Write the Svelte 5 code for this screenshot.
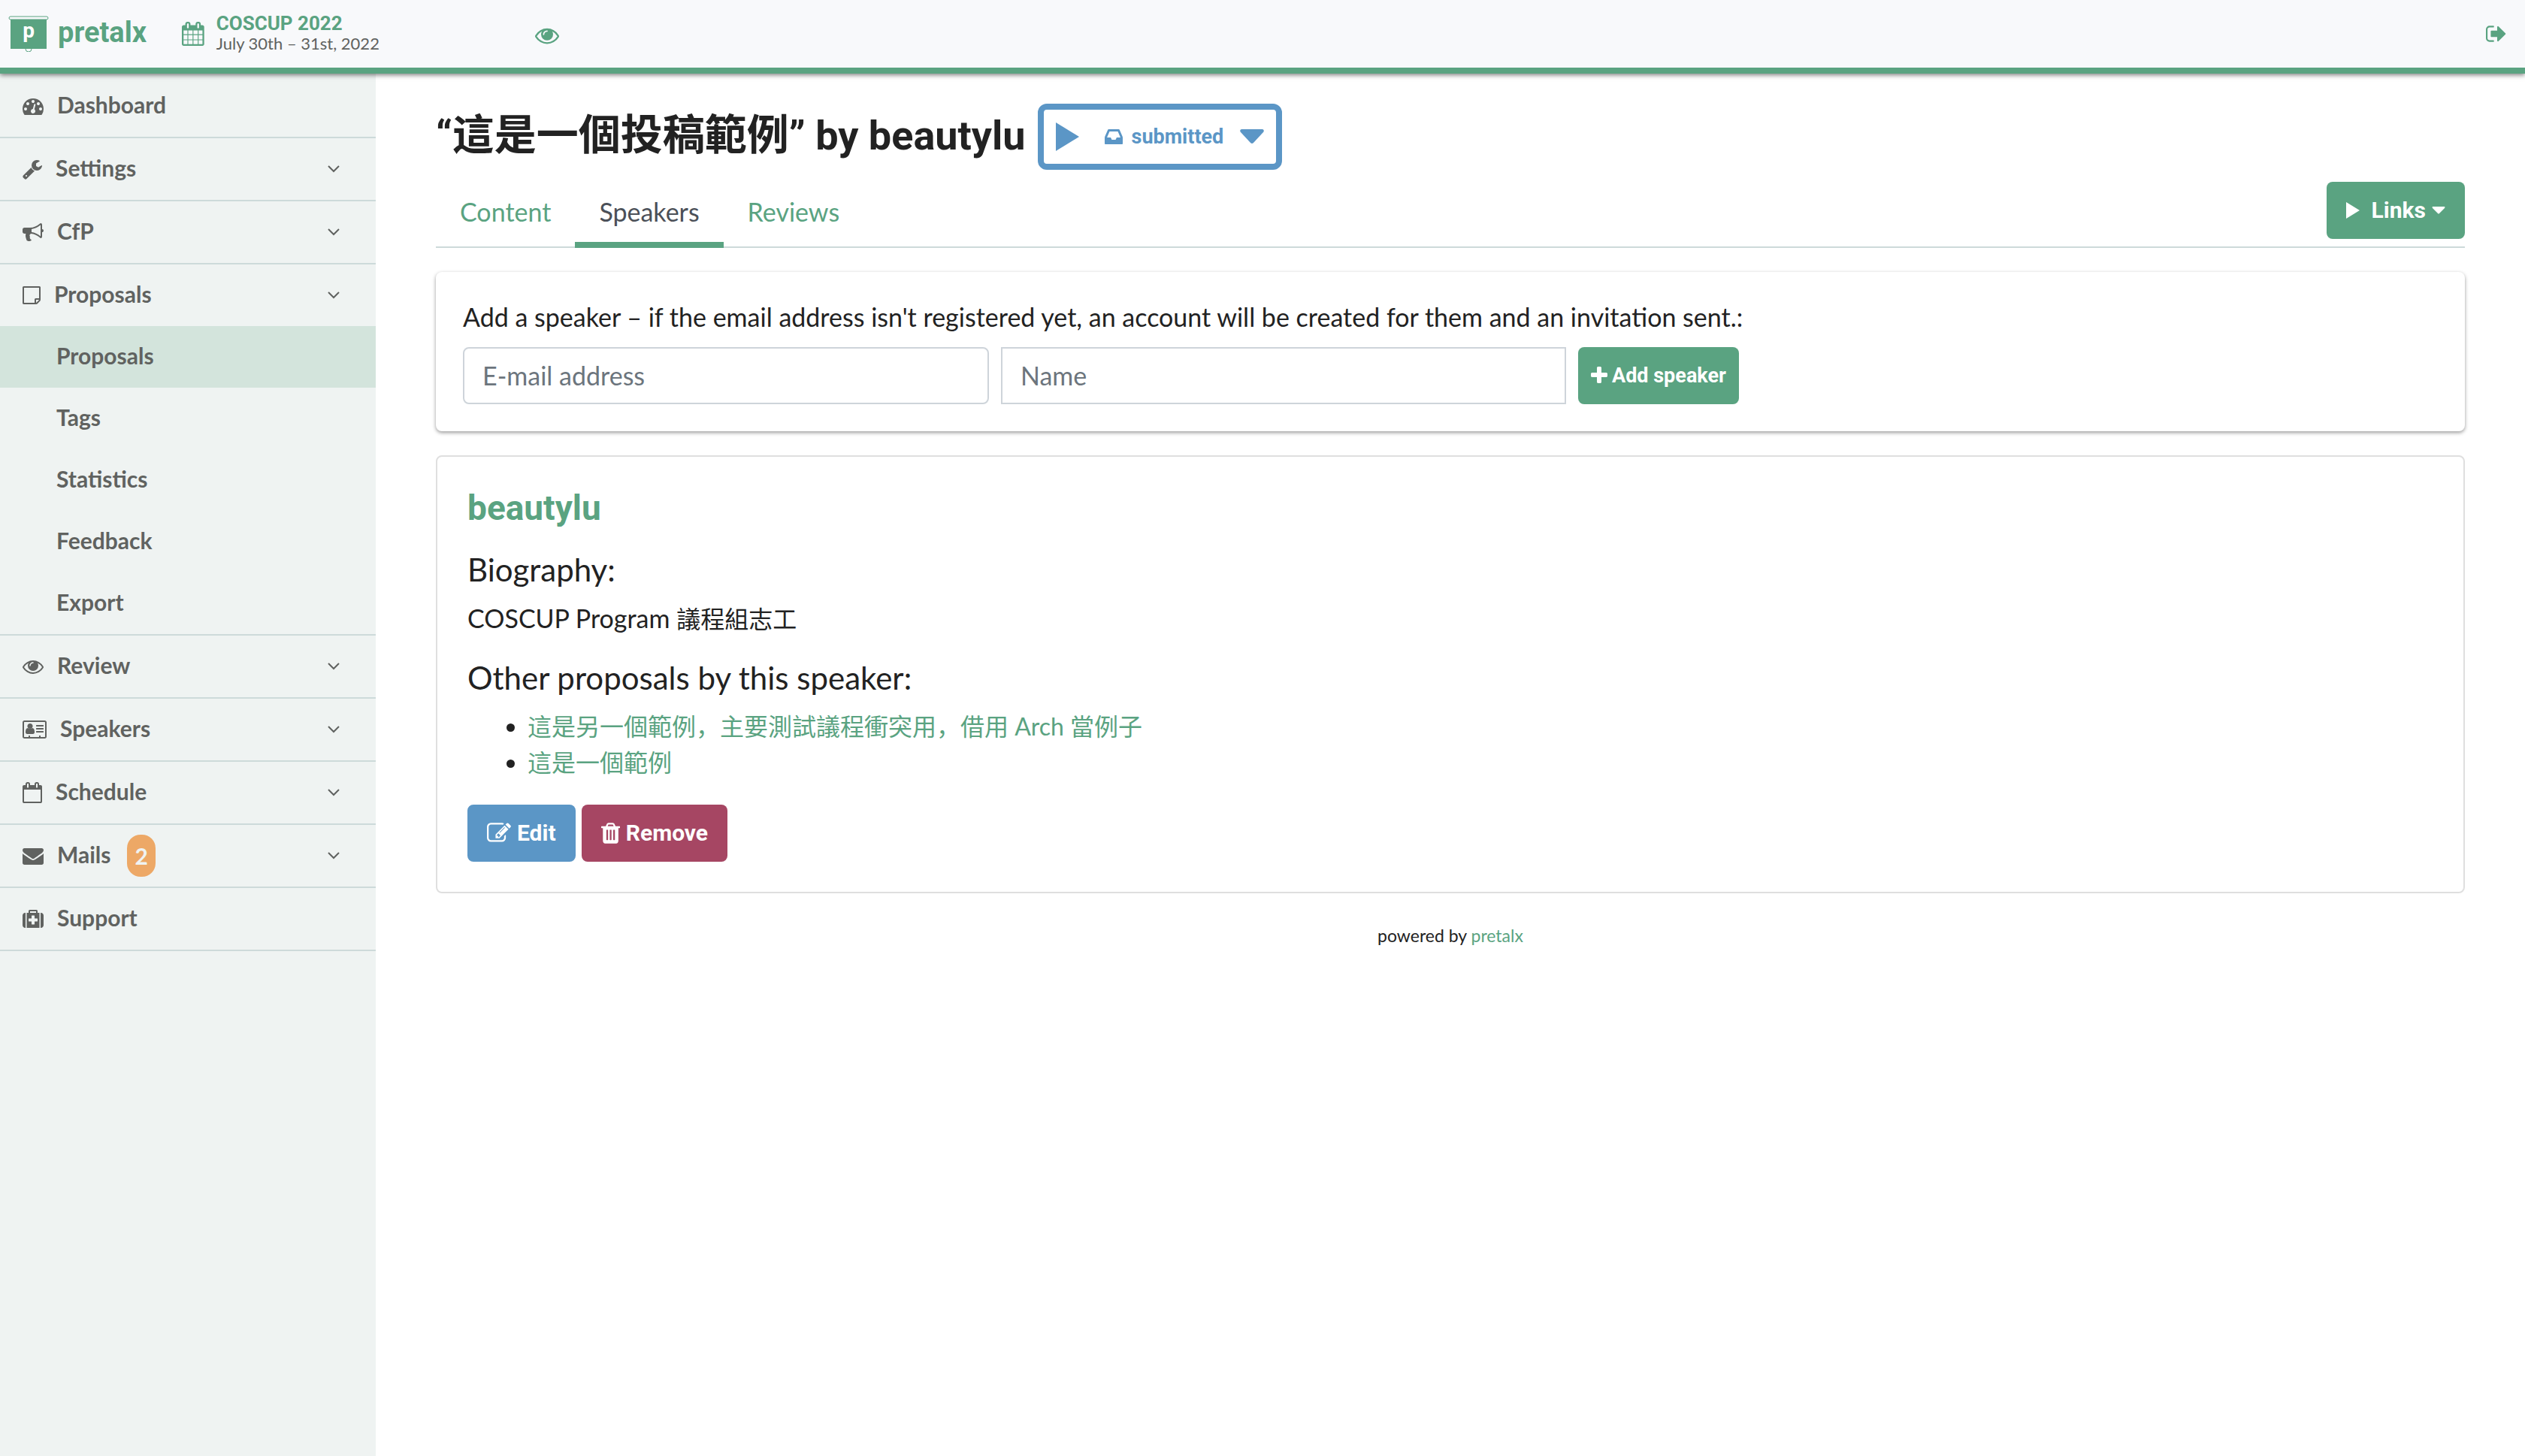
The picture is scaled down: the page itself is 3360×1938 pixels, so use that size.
<script>
  const nav = [
    { label: 'Dashboard', icon: 'dashboard' },
    { label: 'Settings', icon: 'wrench', more: true },
    { label: 'CfP', icon: 'bullhorn', more: true },
    { label: 'Proposals', icon: 'note', more: true, children: ['Proposals', 'Tags', 'Statistics', 'Feedback', 'Export'] },
    { label: 'Review', icon: 'eye', more: true },
    { label: 'Speakers', icon: 'card', more: true },
    { label: 'Schedule', icon: 'calendarO', more: true },
    { label: 'Mails', icon: 'envelope', more: true, badge: 2 },
    { label: 'Support', icon: 'medkit' }
  ];
  const tabs = ['Content', 'Speakers', 'Reviews'];
  const proposals = ['這是另一個範例，主要測試議程衝突用，借用 Arch 當例子', '這是一個範例'];

  const calTabs =
    'M576 448v-288q0-13-9.5-22.5t-22.5-9.5h-64q-13 0-22.5 9.5t-9.5 22.5v288q0 13 9.5 22.5t22.5 9.5h64q13 0 22.5-9.5t9.5-22.5zM1344 448v-288q0-13-9.5-22.5t-22.5-9.5h-64q-13 0-22.5 9.5t-9.5 22.5v288q0 13 9.5 22.5t22.5 9.5h64q13 0 22.5-9.5t9.5-22.5z';
  const calFrame =
    'M1728 384v1280q0 52-38 90t-90 38h-1408q-52 0-90-38t-38-90v-1280q0-52 38-90t90-38h128v-96q0-66 47-113t113-47h64q66 0 113 47t47 113v96h384v-96q0-66 47-113t113-47h64q66 0 113 47t47 113v96h128q52 0 90 38t38 90z';

  // Each icon: left edge and width of its viewBox on a 1792-unit em, then the path.
  const icons = {
    eye: [0, 1792, 'M1664 960q-152-236-381-353 61 104 61 225 0 185-131.5 316.5t-316.5 131.5-316.5-131.5-131.5-316.5q0-121 61-225-229 117-381 353 133 205 333.5 326.5t434.5 121.5 434.5-121.5 333.5-326.5zm-720-384q0-20-14-34t-34-14q-125 0-214.5 89.5t-89.5 214.5q0 20 14 34t34 14 34-14 14-34q0-86 61-147t147-61q20 0 34-14t14-34zm848 384q0 34-20 69-140 230-376.5 368.5t-499.5 138.5-499.5-139-376.5-368q-20-35-20-69t20-69q140-229 376.5-368t499.5-139 499.5 139 376.5 368q20 35 20 69z'],
    dashboard: [0, 1792, 'M384 1152q0-53-37.5-90.5t-90.5-37.5-90.5 37.5-37.5 90.5 37.5 90.5 90.5 37.5 90.5-37.5 37.5-90.5zm192-448q0-53-37.5-90.5t-90.5-37.5-90.5 37.5-37.5 90.5 37.5 90.5 90.5 37.5 90.5-37.5 37.5-90.5zm428 481l101-382q6-26-7.5-48.5t-38.5-29.5-48 6.5-30 39.5l-101 382q-60 5-107 43.5t-63 98.5q-20 77 20 146t117 89 146-20 89-117q16-60-6-117t-72-91zm660-33q0-53-37.5-90.5t-90.5-37.5-90.5 37.5-37.5 90.5 37.5 90.5 90.5 37.5 90.5-37.5 37.5-90.5zm-640-640q0-53-37.5-90.5t-90.5-37.5-90.5 37.5-37.5 90.5 37.5 90.5 90.5 37.5 90.5-37.5 37.5-90.5zm448 192q0-53-37.5-90.5t-90.5-37.5-90.5 37.5-37.5 90.5 37.5 90.5 90.5 37.5 90.5-37.5 37.5-90.5zm320 448q0 261-141 483-19 29-54 29h-1402q-35 0-54-29-141-221-141-483 0-182 71-348t191-286 286-191 348-71 348 71 286 191 191 286 71 348z'],
    wrench: [64, 1664, 'M448 1472q0-26-19-45t-45-19-45 19-19 45 19 45 45 19 45-19 19-45zm644-420l-682 682q-37 37-90 37-52 0-91-37l-106-108q-38-36-38-90 0-53 38-91l681-681q39 98 114.5 173.5t173.5 114.5zm634-435q0 39-23 106-47 134-164.5 217.5t-258.5 83.5q-185 0-316.5-131.5t-131.5-316.5 131.5-316.5 316.5-131.5q58 0 121.5 16.5t107.5 46.5q16 11 16 28t-16 28l-293 169v224l193 107q5-3 79-48.5t135.5-81 70.5-35.5q15 0 23.5 10t8.5 25z'],
    bullhorn: [0, 1792, 'M1664 640q53 0 90.5 37.5t37.5 90.5-37.5 90.5-90.5 37.5v384q0 52-38 90t-90 38q-417-347-812-380-58 19-91 66t-31 100.5 40 92.5q-20 33-23 65.5t6 58 33.5 55 48 50 61.5 50.5q-29 58-111.5 83t-168.5 11.5-132-55.5q-7-23-29.5-87.5t-32-94.5-23-89-15-101 3.5-98.5 22-110.5h-122q-66 0-113-47t-47-113v-192q0-66 47-113t113-47h480q435 0 896-384 52 0 90 38t38 90v384zm-128 604v-954q-394 302-768 343v270q377 42 768 341z'],
    note: [0, 1536, 'M1400 1280h-248v248q29-10 41-22l185-185q12-12 22-41zm-280-128h288v-896h-1280v1280h896v-288q0-40 28-68t68-28zm416-928v1024q0 40-20 88t-48 76l-184 184q-28 28-76 48t-88 20h-1024q-40 0-68-28t-28-68v-1344q0-40 28-68t68-28h1344q40 0 68 28t28 68z'],
    card: [0, 2048, 'M1024 1131q0 64-37 107t-91 43h-512q-54 0-91-43t-37-107q0-75 9-137t31-116 65-85 103-31q76 76 176 76t176-76q60 0 103 31t65 85 31 116 9 137zM870 610q0 92-67 158t-163 66-163-66-67-158 67-158 163-66 163 66 67 158zM1792 1056v64q0 14-9 23t-23 9h-576q-14 0-23-9t-9-23v-64q0-14 9-23t23-9h576q14 0 23 9t9 23zM1792 800v64q0 14-9 23t-23 9h-576q-14 0-23-9t-9-23v-64q0-14 9-23t23-9h576q14 0 23 9t9 23zM1792 544v64q0 14-9 23t-23 9h-576q-14 0-23-9t-9-23v-64q0-14 9-23t23-9h576q14 0 23 9t9 23zM1920 1504v-1216q0-32-32-32h-1728q-32 0-32 32v1216q0 32 32 32h352v-96q0-32 32-32h64q32 0 32 32v96h768v-96q0-32 32-32h64q32 0 32 32v96h352q32 0 32-32zM2048 288v1216q0 66-47 113t-113 47h-1728q-66 0-113-47t-47-113v-1216q0-66 47-113t113-47h1728q66 0 113 47t47 113z'],
    calendarO: [64, 1664, 'M192 1664h1408v-1024h-1408v1024z' + calTabs + calFrame],
    calendar: [64, 1664, 'M192 1664h288v-288h-288zM544 1664h320v-288h-320zM928 1664h320v-288h-320zM1312 1664h288v-288h-288zM192 1312h288v-320h-288zM544 1312h320v-320h-320zM928 1312h320v-320h-320zM1312 1312h288v-320h-288zM192 928h288v-288h-288zM544 928h320v-288h-320zM928 928h320v-288h-320zM1312 928h288v-288h-288z' + calTabs + calFrame],
    envelope: [0, 1792, 'M1792 710v794q0 66-47 113t-113 47h-1472q-66 0-113-47t-47-113v-794q44 49 101 87 362 246 497 345 57 42 92.5 65.5t94.5 48 110 24.5h2q51 0 110-24.5t94.5-48 92.5-65.5q170-123 498-345 57-39 100-87zm0-294q0 79-49 151t-122 123q-376 261-468 325-10 7-42.5 31t-54 38.5-52 32.5-57.5 27-50 9h-2q-23 0-50-9t-57.5-27-52-32.5-54-38.5-42.5-31q-91-64-262-182.5t-205-142.5q-62-42-117-115.5t-55-136.5q0-78 41.5-130t118.5-52h1472q65 0 112.5 47t47.5 113z'],
    medkit: [0, 1792, 'M1280 1088v-192q0-14-9-23t-23-9h-224v-224q0-14-9-23t-23-9h-192q-14 0-23 9t-9 23v224h-224q-14 0-23 9t-9 23v192q0 14 9 23t23 9h224v224q0 14 9 23t23 9h192q14 0 23-9t9-23v-224h224q14 0 23-9t9-23zM640 384h512v-128h-512zM256 384v1280h-32q-92 0-158-66t-66-158v-832q0-92 66-158t158-66zM1440 384v1280h-1088v-1280h160v-160q0-40 28-68t68-28h576q40 0 68 28t28 68v160zM1792 608v832q0 92-66 158t-158 66h-32v-1280h32q92 0 158 66t66 158z'],
    signout: [64, 1664, 'M704 1440q0 4 1 20t.5 26.5-3 23.5-10 19.5-20.5 6.5h-320q-119 0-203.5-84.5t-84.5-203.5v-704q0-119 84.5-203.5t203.5-84.5h320q13 0 22.5 9.5t9.5 22.5q0 4 1 20t.5 26.5-3 23.5-10 19.5-20.5 6.5h-320q-66 0-113 47t-47 113v704q0 66 47 113t113 47h312l11.5 1 11.5 3 8 5.5 7 9 2 13.5zm928-544q0 26-19 45l-544 544q-19 19-45 19t-45-19-19-45v-288h-448q-26 0-45-19t-19-45v-384q0-26 19-45t45-19h448v-288q0-26 19-45t45-19 45 19l544 544q19 19 19 45z'],
    inbox: [128, 1536, 'M1151 960h316q-1-3-2.5-8t-2.5-8l-212-496h-708l-212 496q-1 2-2.5 8t-2.5 8h316l95 192h320zm513 30v482q0 26-19 45t-45 19h-1408q-26 0-45-19t-19-45v-482q0-62 25-123l238-552q10-25 36.5-42t52.5-17h832q26 0 52.5 17t36.5 42l238 552q25 61 25 123z'],
    plus: [192, 1408, 'M1600 736v192q0 40-28 68t-68 28h-416v416q0 40-28 68t-68 28h-192q-40 0-68-28t-28-68v-416h-416q-40 0-68-28t-28-68v-192q0-40 28-68t68-28h416v-416q0-40 28-68t68-28h192q40 0 68 28t28 68v416h416q40 0 68 28t28 68z'],
    edit: [0, 1792, 'M888 1184l116-116-152-152-116 116v56h96v96h56zm440-720q-16-16-33 1l-350 350q-17 17-1 33t33-1l350-350q17-17 1-33zm80 594v190q0 119-84.5 203.5t-203.5 84.5h-832q-119 0-203.5-84.5t-84.5-203.5v-832q0-119 84.5-203.5t203.5-84.5h832q63 0 117 25 15 7 18 23 3 17-9 29l-49 49q-14 14-32 8-23-6-45-6h-832q-66 0-113 47t-47 113v832q0 66 47 113t113 47h832q66 0 113-47t47-113v-126q0-13 9-22l64-64q15-15 35-7t20 29zm-96-738l288 288-672 672h-288v-288zm444 132l-92 92-288-288 92-92q28-28 68-28t68 28l152 152q28 28 28 68t-28 68z'],
    trash: [192, 1408, 'M704 1376v-704q0-14-9-23t-23-9h-64q-14 0-23 9t-9 23v704q0 14 9 23t23 9h64q14 0 23-9t9-23zm256 0v-704q0-14-9-23t-23-9h-64q-14 0-23 9t-9 23v704q0 14 9 23t23 9h64q14 0 23-9t9-23zm256 0v-704q0-14-9-23t-23-9h-64q-14 0-23 9t-9 23v704q0 14 9 23t23 9h64q14 0 23-9t9-23zm-544-992h448l-48-117q-7-9-17-11h-317q-10 2-17 11zm928 32v64q0 14-9 23t-23 9h-96v948q0 83-47 143.5t-113 60.5h-832q-66 0-113-58.5t-47-141.5v-952h-96q-14 0-23-9t-9-23v-64q0-14 9-23t23-9h309l70-167q15-37 54-63t79-26h320q40 0 79 26t54 63l70 167h309q14 0 23 9t9 23z']
  };
</script>

{#snippet icon(name)}
  <svg class="icon" viewBox="{icons[name][0]} 0 {icons[name][1]} 1792" aria-hidden="true">
    <path fill-rule="evenodd" d={icons[name][2]} />
  </svg>
{/snippet}

<div class="page">
  <header>
    <a class="brand" href="#home">
      <svg class="logo" viewBox="0 0 54 48" aria-hidden="true">
        <rect x="1" y="1" width="52" height="4" rx="2" fill="none" stroke="currentColor" stroke-width="1" />
        <path d="M3 5h48v39H3z" />
        <path d="M23 44a4 4 0 0 0 8 0" fill="none" stroke="currentColor" stroke-width="1" />
        <text x="27" y="29" text-anchor="middle">p</text>
      </svg>
      <span>pretalx</span>
    </a>
    <a class="event" href="#event">
      {@render icon('calendar')}
      <span class="event-text">
        <strong>COSCUP 2022</strong>
        <small>July 30th – 31st, 2022</small>
      </span>
    </a>
    <a class="preview" href="#public" aria-label="View public page">{@render icon('eye')}</a>
    <a class="logout" href="#logout" aria-label="Log out">{@render icon('signout')}</a>
  </header>

  <div class="body">
    <nav aria-label="Main">
      <ul>
        {#each nav as item}
          <li>
            <a class="nav-link" href="#{item.label.toLowerCase()}">
              {@render icon(item.icon)}
              <span class="label">{item.label}</span>
              {#if item.badge}<span class="badge">{item.badge}</span>{/if}
              {#if item.more}
                <svg class="chevron" viewBox="0 0 16 10" aria-hidden="true"><path d="M1 1l7 7 7-7" /></svg>
              {/if}
            </a>
            {#if item.children}
              <ul class="sub">
                {#each item.children as child, i}
                  <li><a class:active={i === 0} href="#{child.toLowerCase()}">{child}</a></li>
                {/each}
              </ul>
            {/if}
          </li>
        {/each}
      </ul>
    </nav>

    <main>
      <div class="title">
        <h1>“<span lang="zh">這是一個投稿範例</span>” by beautylu</h1>
        <button class="state" type="button">
          <svg class="play" viewBox="0 0 31 38" aria-hidden="true"><path d="M0 0l31 19L0 38z" /></svg>
          {@render icon('inbox')}
          <span>submitted</span>
          <svg class="caret" viewBox="0 0 32 20" aria-hidden="true"><path d="M2 0h28q3 1 1 4L18 18q-2 2-4 0L1 4q-2-3 1-4z" /></svg>
        </button>
      </div>

      <div class="tabbar">
        <div class="tabs">
          {#each tabs as tab}
            <a class:current={tab === 'Speakers'} href="#tab-{tab.toLowerCase()}">{tab}</a>
          {/each}
        </div>
        <button class="btn green links" type="button">
          <svg class="play" viewBox="0 0 31 38" aria-hidden="true"><path d="M0 0l31 19L0 38z" /></svg>
          <span>Links</span>
          <svg class="caret" viewBox="0 0 18 10" aria-hidden="true"><path d="M1 0h16q1 1 0 2L10 9q-1 1-2 0L1 2q-1-1 0-2z" /></svg>
        </button>
      </div>

      <form class="card add">
        <label for="email">Add a speaker – if the email address isn't registered yet, an account will be created for them and an invitation sent.:</label>
        <div class="fields">
          <input id="email" class="email" type="email" placeholder="E-mail address" />
          <input class="name" type="text" placeholder="Name" aria-label="Name" />
          <button class="btn green small" type="button">{@render icon('plus')}<span>Add speaker</span></button>
        </div>
      </form>

      <section class="card speaker">
        <h2><a href="#speaker">beautylu</a></h2>
        <h3>Biography:</h3>
        <p>COSCUP Program <span lang="zh">議程組志工</span></p>
        <h3>Other proposals by this speaker:</h3>
        <ul>
          {#each proposals as p}
            <li><a href="#proposal">{p}</a></li>
          {/each}
        </ul>
        <div class="actions">
          <button class="btn blue" type="button">{@render icon('edit')}<span>Edit</span></button>
          <button class="btn red" type="button">{@render icon('trash')}<span>Remove</span></button>
        </div>
      </section>

      <footer>powered by <a href="#pretalx">pretalx</a></footer>
    </main>
  </div>
</div>

<style>
  :global(body) {
    background: #fff;
  }
  .page {
    --green: #5aa381;
    --blue: #5b96c6;
    --line: #cddada;
    --sans: Lato, "Noto Sans CJK SC", sans-serif;
    --head: Roboto, "Noto Sans CJK SC", sans-serif;
    display: flex;
    flex-direction: column;
    min-height: 100vh;
    font: 34px/48px var(--sans);
    color: #222;
  }
  a {
    color: var(--green);
    text-decoration: none;
  }
  ul,
  h1,
  h2,
  h3,
  p {
    margin: 0;
    padding: 0;
  }
  .icon {
    height: 28px;
    width: auto;
    flex: none;
    fill: currentColor;
  }
  header {
    display: flex;
    align-items: center;
    height: 90px;
    padding: 0 24px 0 11px;
    background: #f8f9fb;
    border-bottom: 8px solid var(--green);
    box-shadow: 0 2px 6px rgba(0, 0, 0, 0.5);
    position: relative;
  }
  .brand {
    display: flex;
    align-items: center;
    gap: 12px;
    width: 231px;
    font: 700 38px/48px var(--head);
  }
  .brand span {
    padding-bottom: 4px;
  }
  .logo {
    width: 54px;
    height: 48px;
    fill: currentColor;
  }
  .logo text {
    font: 700 28px var(--head);
    fill: #fff;
  }
  .event {
    display: flex;
    align-items: center;
    gap: 16px;
    width: 470px;
  }
  .event .icon {
    height: 32px;
  }
  .event-text {
    display: flex;
    flex-direction: column;
    padding-bottom: 2px;
  }
  .event strong {
    font: 700 26px/28px var(--head);
  }
  .event small {
    font-size: 22px;
    line-height: 26px;
    color: #606260;
  }
  .preview,
  .logout {
    display: flex;
  }
  .preview {
    padding-top: 4px;
  }
  .preview .icon {
    height: 32px;
  }
  .logout {
    margin-left: auto;
  }
  .logout .icon {
    height: 30px;
  }
  .body {
    display: flex;
    flex: 1;
  }
  nav {
    flex: none;
    width: 500px;
    padding-top: 2px;
    background: #eff3f2;
    font-weight: 700;
    font-size: 30px;
  }
  nav ul {
    list-style: none;
  }
  nav > ul > li {
    border-bottom: 2px solid var(--line);
  }
  nav a {
    color: #606260;
  }
  .nav-link {
    display: flex;
    align-items: center;
    height: 82px;
    padding: 0 48px 0 30px;
    gap: 18px;
  }
  .label {
    padding-bottom: 4px;
  }
  .chevron {
    width: 16px;
    height: 10px;
    margin-left: auto;
    fill: none;
    stroke: currentColor;
    stroke-width: 2;
  }
  .badge {
    display: flex;
    align-items: center;
    height: 56px;
    margin-left: 4px;
    padding: 0 10px;
    border-radius: 18px;
    background: #eda866;
    color: #eff3f2;
  }
  .sub a {
    display: block;
    padding: 15px 75px 19px;
  }
  .sub .active {
    background: #d3e4dc;
  }
  main {
    flex: 1;
    min-width: 0;
    padding: 40px 80px;
  }
  .title {
    display: flex;
    align-items: center;
    gap: 16px;
  }
  h1 {
    font: 700 54px/80px var(--head);
    padding-bottom: 4px;
  }
  h1 span {
    font-size: 56px;
  }
  button {
    cursor: pointer;
  }
  .play,
  .caret {
    fill: currentColor;
  }
  .state {
    display: flex;
    align-items: center;
    height: 88px;
    padding: 0 16px;
    border: 8px solid var(--blue);
    border-radius: 12px;
    background: #fff;
    color: var(--blue);
    font: 700 27px/40px var(--head);
  }
  .state .play {
    width: 31px;
    height: 38px;
    margin-right: 34px;
  }
  .state .icon {
    margin-right: 12px;
  }
  .state .caret {
    width: 32px;
    height: 20px;
    margin-left: 22px;
  }
  .tabbar {
    display: flex;
    justify-content: space-between;
    height: 102px;
    border-bottom: 2px solid var(--line);
  }
  .tabs {
    display: flex;
    margin-bottom: -2px;
  }
  .tabs a {
    padding: 32px 32px 16px;
    border-bottom: 8px solid transparent;
  }
  .tabs .current {
    color: #4b5058;
    border-color: var(--green);
  }
  .btn {
    display: flex;
    align-items: center;
    gap: 8px;
    height: 76px;
    padding: 0 26px;
    border: 0;
    border-radius: 8px;
    color: #fff;
    font: 700 30px/48px var(--head);
  }
  .green {
    background: var(--green);
  }
  .blue {
    background: var(--blue);
  }
  .red {
    background: #a64663;
  }
  .links {
    margin-top: 16px;
  }
  .links .play {
    width: 18px;
    height: 22px;
    margin-right: 8px;
  }
  .links .caret {
    width: 18px;
    height: 10px;
  }
  .card {
    border-radius: 8px;
    background: #fff;
  }
  .add {
    display: flex;
    flex-direction: column;
    gap: 16px;
    margin-top: 32px;
    padding: 36px;
    box-shadow: 0 2px 5px rgba(0, 0, 0, 0.4);
  }
  .fields {
    display: flex;
    gap: 16px;
  }
  input {
    box-sizing: border-box;
    height: 76px;
    padding: 0 24px 2px;
    border: 2px solid #ced4da;
    border-radius: 8px;
    font: 34px/48px var(--sans);
  }
  input::placeholder {
    color: #6c757d;
    opacity: 1;
  }
  .email {
    width: 700px;
  }
  .name {
    width: 752px;
    border-radius: 0;
  }
  .small {
    padding: 0 17px;
    font-size: 27px;
    gap: 6px;
  }
  .speaker {
    margin-top: 32px;
    padding: 40px;
    border: 2px solid #dfdfdf;
  }
  h2 {
    font: 700 46px/56px var(--head);
  }
  h3 {
    margin: 26px 0 13px;
    font-size: 42px;
    font-weight: 400;
    line-height: 56px;
  }
  p span {
    font-size: 32px;
  }
  .speaker ul {
    padding-left: 80px;
    font-size: 32px;
  }
  .actions {
    display: flex;
    gap: 8px;
    margin-top: 32px;
  }
  .actions .icon {
    height: 32px;
  }
  footer {
    margin-top: 40px;
    text-align: center;
    font-size: 23px;
    line-height: 32px;
  }
</style>
